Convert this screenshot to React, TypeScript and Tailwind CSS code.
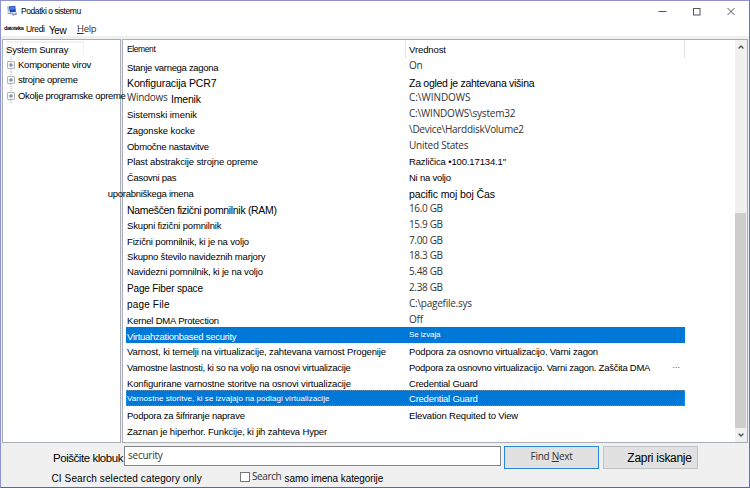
import { ChevronDown, ChevronUp } from 'lucide-react'
import clsx from 'clsx'

interface Row {
    name: string
    value?: string
    nameClass?: string
    valueClass?: string
    selected?: boolean
}

const UI = "font-['Open_Sans',sans-serif] text-[10px] pt-[0.4px] text-[#333]"

const rows: Row[] = [
    { name: 'Stanje varnega zagona', nameClass: 'tracking-[-0.31px]', value: 'On', valueClass: `${UI} tracking-[-0.4px]` },
    { name: 'Konfiguracija PCR7', nameClass: 'text-[10.5px] tracking-[-0.12px]', value: 'Za ogled je zahtevana višina', valueClass: 'text-[10.5px] tracking-[-0.28px]' },
    { name: 'Windows Imenik', value: 'C:\\WINDOWS', valueClass: `${UI} tracking-[-0.04px]` },
    { name: 'Sistemski imenik', nameClass: 'tracking-[-0.05px]', value: 'C:\\WINDOWS\\system32', valueClass: `${UI} tracking-[-0.19px]` },
    { name: 'Zagonske kocke', nameClass: 'tracking-[-0.09px]', value: '\\Device\\HarddiskVolume2', valueClass: `${UI} tracking-[-0.28px]` },
    { name: 'Območne nastavitve', nameClass: 'tracking-[-0.27px]', value: 'United States', valueClass: `${UI} tracking-[-0.24px]` },
    { name: 'Plast abstrakcije strojne opreme', nameClass: 'pt-[1.7px] tracking-[-0.13px]', value: 'Različica •100.17134.1"', valueClass: 'pt-[1.7px] tracking-[-0.14px]' },
    { name: 'Časovni pas', nameClass: 'tracking-[-0.28px]', value: 'Ni na voljo', valueClass: 'pt-[1.9px] tracking-[-0.24px]' },
    { name: 'uporabniškega imena', nameClass: 'relative z-20 pt-[2.3px] -ml-[19.3px] tracking-[-0.27px]', value: 'pacific moj boj Čas', valueClass: 'text-[10.5px] tracking-[-0.12px]' },
    { name: 'Nameščen fizični pomnilnik (RAM)', nameClass: 'text-[10.5px] pt-[2.9px] tracking-[-0.32px]', value: '16.0 GB', valueClass: `${UI} tracking-[-0.35px]` },
    { name: 'Skupni fizični pomnilnik', nameClass: 'tracking-[-0.16px]', value: '15.9 GB', valueClass: `${UI} tracking-[-0.35px]` },
    { name: 'Fizični pomnilnik, ki je na voljo', nameClass: 'tracking-[-0.16px]', value: '7.00 GB', valueClass: `${UI} tracking-[-0.35px]` },
    { name: 'Skupno število navideznih marjory', nameClass: 'tracking-[-0.18px]', value: '18.3 GB', valueClass: `${UI} tracking-[-0.35px]` },
    { name: 'Navidezni pomnilnik, ki je na voljo', nameClass: 'pt-[1.7px] tracking-[-0.18px]', value: '5.48 GB', valueClass: `${UI} tracking-[-0.35px]` },
    { name: 'Page Fiber space', nameClass: 'text-[10px] tracking-[-0.16px]', value: '2.38 GB', valueClass: `${UI} tracking-[-0.35px]` },
    { name: 'page File', nameClass: 'text-[10px] pt-[2.9px] tracking-[0.17px]', value: 'C:\\pagefile.sys', valueClass: `${UI} tracking-[-0.25px]` },
    { name: 'Kernel DMA Protection', nameClass: 'tracking-[-0.2px]', value: 'Off', valueClass: `${UI} tracking-[-0.25px]` },
    { name: 'Virtuahzationbased security', nameClass: 'tracking-[-0.27px]', value: 'Se izvaja', valueClass: 'text-[8px] pt-[0.9px] tracking-[-0.12px]', selected: true },
    { name: 'Varnost, ki temelji na virtualizacije, zahtevana varnost Progenije', nameClass: 'tracking-[-0.13px]', value: 'Podpora za osnovno virtualizacijo. Varni zagon', valueClass: 'tracking-[-0.17px]' },
    { name: 'Varnostne lastnosti, ki so na voljo na osnovi virtualizacije', nameClass: 'tracking-[-0.24px]', value: 'Podpora za osnovno virtualizacijo. Varni zagon. Zaščita DMA', valueClass: 'tracking-[-0.26px]' },
    { name: 'Konfigurirane varnostne storitve na osnovi virtualizacije', nameClass: 'pt-[2.2px] tracking-[-0.14px]', value: 'Credential Guard', valueClass: 'pt-[2.2px] tracking-[-0.23px]' },
    { name: 'Varnostne storitve, ki se izvajajo na podlagi virtualizacije', nameClass: 'text-[8px] pt-[1.2px] tracking-[0.065px]', value: 'Credential Guard', valueClass: 'pt-[2px] tracking-[-0.23px]', selected: true },
    { name: 'Podpora za šifriranje naprave', nameClass: 'tracking-[-0.22px]', value: 'Elevation Requited to View', valueClass: 'tracking-[-0.17px]' },
    { name: 'Zaznan je hiperhor. Funkcije, ki jih zahteva Hyper', nameClass: 'tracking-[-0.15px]' },
]

const treeItems = [
    { label: 'Komponente virov', className: 'tracking-[-0.22px]' },
    { label: 'strojne opreme', className: 'tracking-[-0.26px]' },
    { label: 'Okolje programske opreme', className: 'tracking-[-0.29px]' },
]

const AppIcon = () => (
    <svg width="12" height="12" viewBox="0 0 12 12">
        <path d="M1 1.5 L4 0.8 L4.5 6 L1.8 7Z" fill="#a9bdd8" />
        <path d="M3 1.4 L9.2 0.7 L10 6.8 L4 7.6Z" fill="#2148b4" />
        <path d="M4 2.2 L8.4 1.6 L8.9 4.2 L4.5 5Z" fill="#4c7fe0" />
        <path d="M1.2 7.4 L5.4 7.8 L5.4 9.6 L1.6 8.8Z" fill="#8ba3c7" />
        <path d="M5.2 8 L10.6 7.4 L11 9.6 L7 10.8Z" fill="#7d93b8" />
        <path d="M6.4 8.6 L9.6 8.2" stroke="#dfe8f5" strokeWidth="0.8" />
    </svg>
)

const PlusBox = () => (
    <svg width="8" height="16" viewBox="0 0 8 16" className="shrink-0">
        <path d="M4 0V4M4 12V16" stroke="#b0b0b0" strokeDasharray="1 1" />
        <rect x="0.5" y="4.5" width="7" height="7" rx="0.5" fill="#f6f6f6" stroke="#b4b4b4" />
        <path d="M2 8H6M4 6V10" stroke="#5f76b4" />
    </svg>
)

const TitleBar = () => (
    <div className="flex h-5 shrink-0 items-center bg-white pl-[5px]">
        <AppIcon />
        <span className="ml-[3px] text-[8.5px] tracking-[-0.43px]">Podatki o sistemu</span>
        <svg width="78" height="9" viewBox="0 0 78 9" className="mr-[13px] ml-auto" fill="none" stroke="#555">
            <path d="M0.5 4.5H8.5" />
            <rect x="35.5" y="1.5" width="6.5" height="6.5" />
            <path d="M69.5 1L76.5 8M76.5 1L69.5 8" />
        </svg>
    </div>
)

const MenuBar = () => (
    <div className="flex h-[15px] shrink-0 bg-white pl-[3px] leading-[14px]">
        <span className="w-[22px] text-[5.5px] font-bold tracking-[-0.4px]">datoteka</span>
        <span className="w-[23px] pt-px text-[8.5px] tracking-[-0.35px]">Uredi</span>
        <span className="w-[28px] pt-[3px] text-[10px] tracking-[-0.4px]">Yew</span>
        <span className="pt-px font-['Open_Sans',sans-serif] text-[9.5px] tracking-[-0.3px] text-[#333]">
            <u className="underline-offset-1">H</u>elp
        </span>
    </div>
)

const TreePanel = () => (
    <div className="relative z-10 w-[119px] shrink-0 border border-[#a9adb5] bg-white">
        <div className="ml-[3px] h-[17px] w-[78px] pt-px">
            <div className="h-[14px] border-t-[2px] border-r border-[#f1f1f1] text-[9.5px] leading-[14px] tracking-[-0.16px] whitespace-nowrap">
                System Sunray
            </div>
        </div>
        {treeItems.map(({ label, className }) => (
            <div key={label} className="flex h-[15.6px] items-center pl-[4px] whitespace-nowrap">
                <PlusBox />
                <span className={clsx('ml-[3px] text-[9.5px] leading-[14px]', className)}>{label}</span>
            </div>
        ))}
    </div>
)

const cell = 'leading-[14px] whitespace-nowrap'

// default size and padding only where the row does not bring its own
const cellClass = (extra = '') =>
    clsx(cell, !extra.includes('text-[') && 'text-[9.5px]', !extra.includes('pt-') && 'pt-[2.5px]', extra)

const ListPanel = () => (
    <div className="flex min-w-0 flex-1 border border-[#a9adb5] bg-white">
        <div className="flex min-w-0 flex-1 flex-col pl-[3px]">
            <div className="flex h-[18px] shrink-0">
                <div className="w-[280px] border-r border-[#e2e2e2] pl-px text-[8.5px] leading-[18px] tracking-[-0.4px]">Element</div>
                <div className="w-[279px] border-r border-[#e2e2e2] pl-[3px] text-[9.5px] leading-[20px] tracking-[-0.1px]">Vrednost</div>
            </div>
            {rows.map((row, i) => (
                <div
                    key={i}
                    className={clsx(
                        'flex h-[15.83px] w-[559px] shrink-0 pl-px',
                        row.selected && 'bg-[#0078d7] text-white',
                        i === 21 && 'outline-1 -outline-offset-1 outline-dotted outline-[#5c8bb8]',
                    )}
                >
                    <div className="w-[282px] shrink-0">
                        {i === 2 ? (
                            <div className="flex">
                                <span className={clsx(cellClass(UI), 'w-[44px] tracking-[-0.3px]')}>Windows</span>
                                <span className={cellClass('text-[10.5px] tracking-[-0.18px]')}>Imenik</span>
                            </div>
                        ) : (
                            <div className={cellClass(row.nameClass)}>{row.name}</div>
                        )}
                    </div>
                    <div className={cellClass(row.valueClass)}>{row.value}</div>
                    {i === 19 && <span className="ml-auto pr-[5px] text-[9px] leading-[13px] text-[#555]">...</span>}
                </div>
            ))}
        </div>
        <div className="flex w-[12px] shrink-0 flex-col items-center bg-[#f0f0f0] pr-px">
            <ChevronUp className="mt-[3px] h-2 w-2 text-[#505050]" strokeWidth={4} />
            <div className="mt-[162px] h-[215px] w-[11px] bg-[#cdcdcd]" />
            <ChevronDown className="mt-[3px] h-2 w-2 text-[#505050]" strokeWidth={4} />
        </div>
    </div>
)

const SearchBar = () => (
    <div className="flex h-[44px] shrink-0 flex-col whitespace-nowrap">
        <div className="flex h-[27px] pt-[3px]">
            <span className="w-[123px] shrink-0 pl-[52px] text-[11.5px] leading-[24px] tracking-[-0.45px]">Poiščite klobuk</span>
            <div className="h-5 w-[377px] shrink-0 border border-[#858585] bg-white pl-[3px] font-['Open_Sans',sans-serif] text-[10px] leading-[16px] tracking-[-0.25px] text-[#333]">
                security
            </div>
            <button className="ml-[3px] flex h-[23px] w-[95px] shrink-0 justify-center border border-[#2a86d8] bg-[#e1e1e1] font-['Open_Sans',sans-serif] text-[10px] leading-[19px] font-medium tracking-[-0.28px] whitespace-pre text-[#333]">
                <span>Find <u className="underline-offset-1">N</u>ext</span>
            </button>
            <button className="ml-[4px] h-[23px] w-[95px] shrink-0 border border-[#c2c2c2] bg-[#e1e1e1] pl-[18px] text-[12px] leading-[23px] tracking-[-0.29px]">
                Zapri iskanje
            </button>
        </div>
        <div className="flex h-[17px]">
            <span className="w-[239px] shrink-0 pl-[50.5px] text-[10px] leading-[17px] tracking-[0.11px]">CI Search selected category only</span>
            <span className="mt-[2px] h-[10px] w-[10px] shrink-0 border border-[#777] bg-white" />
            <span className="w-[34.5px] shrink-0 pl-[2px] font-['Open_Sans',sans-serif] text-[10px] leading-[13px] tracking-[-0.4px] text-[#333]">Search</span>
            <span className="text-[10px] leading-[17px] tracking-[-0.09px]">samo imena kategorije</span>
        </div>
    </div>
)

const App = () => {
    return (
        <div className="flex h-[488px] w-[750px] flex-col overflow-hidden border border-t-[#9093d2] border-r-[#6c70bb] border-b-[#5d62ad] border-l-[#9093d2] bg-[#f0f0f0] font-['Liberation_Sans',sans-serif] text-black">
            <TitleBar />
            <MenuBar />
            <div className="flex h-[407px] shrink-0 gap-px pt-[3px] pr-[1px] pl-px">
                <TreePanel />
                <ListPanel />
            </div>
            <SearchBar />
        </div>
    )
}

export default App
